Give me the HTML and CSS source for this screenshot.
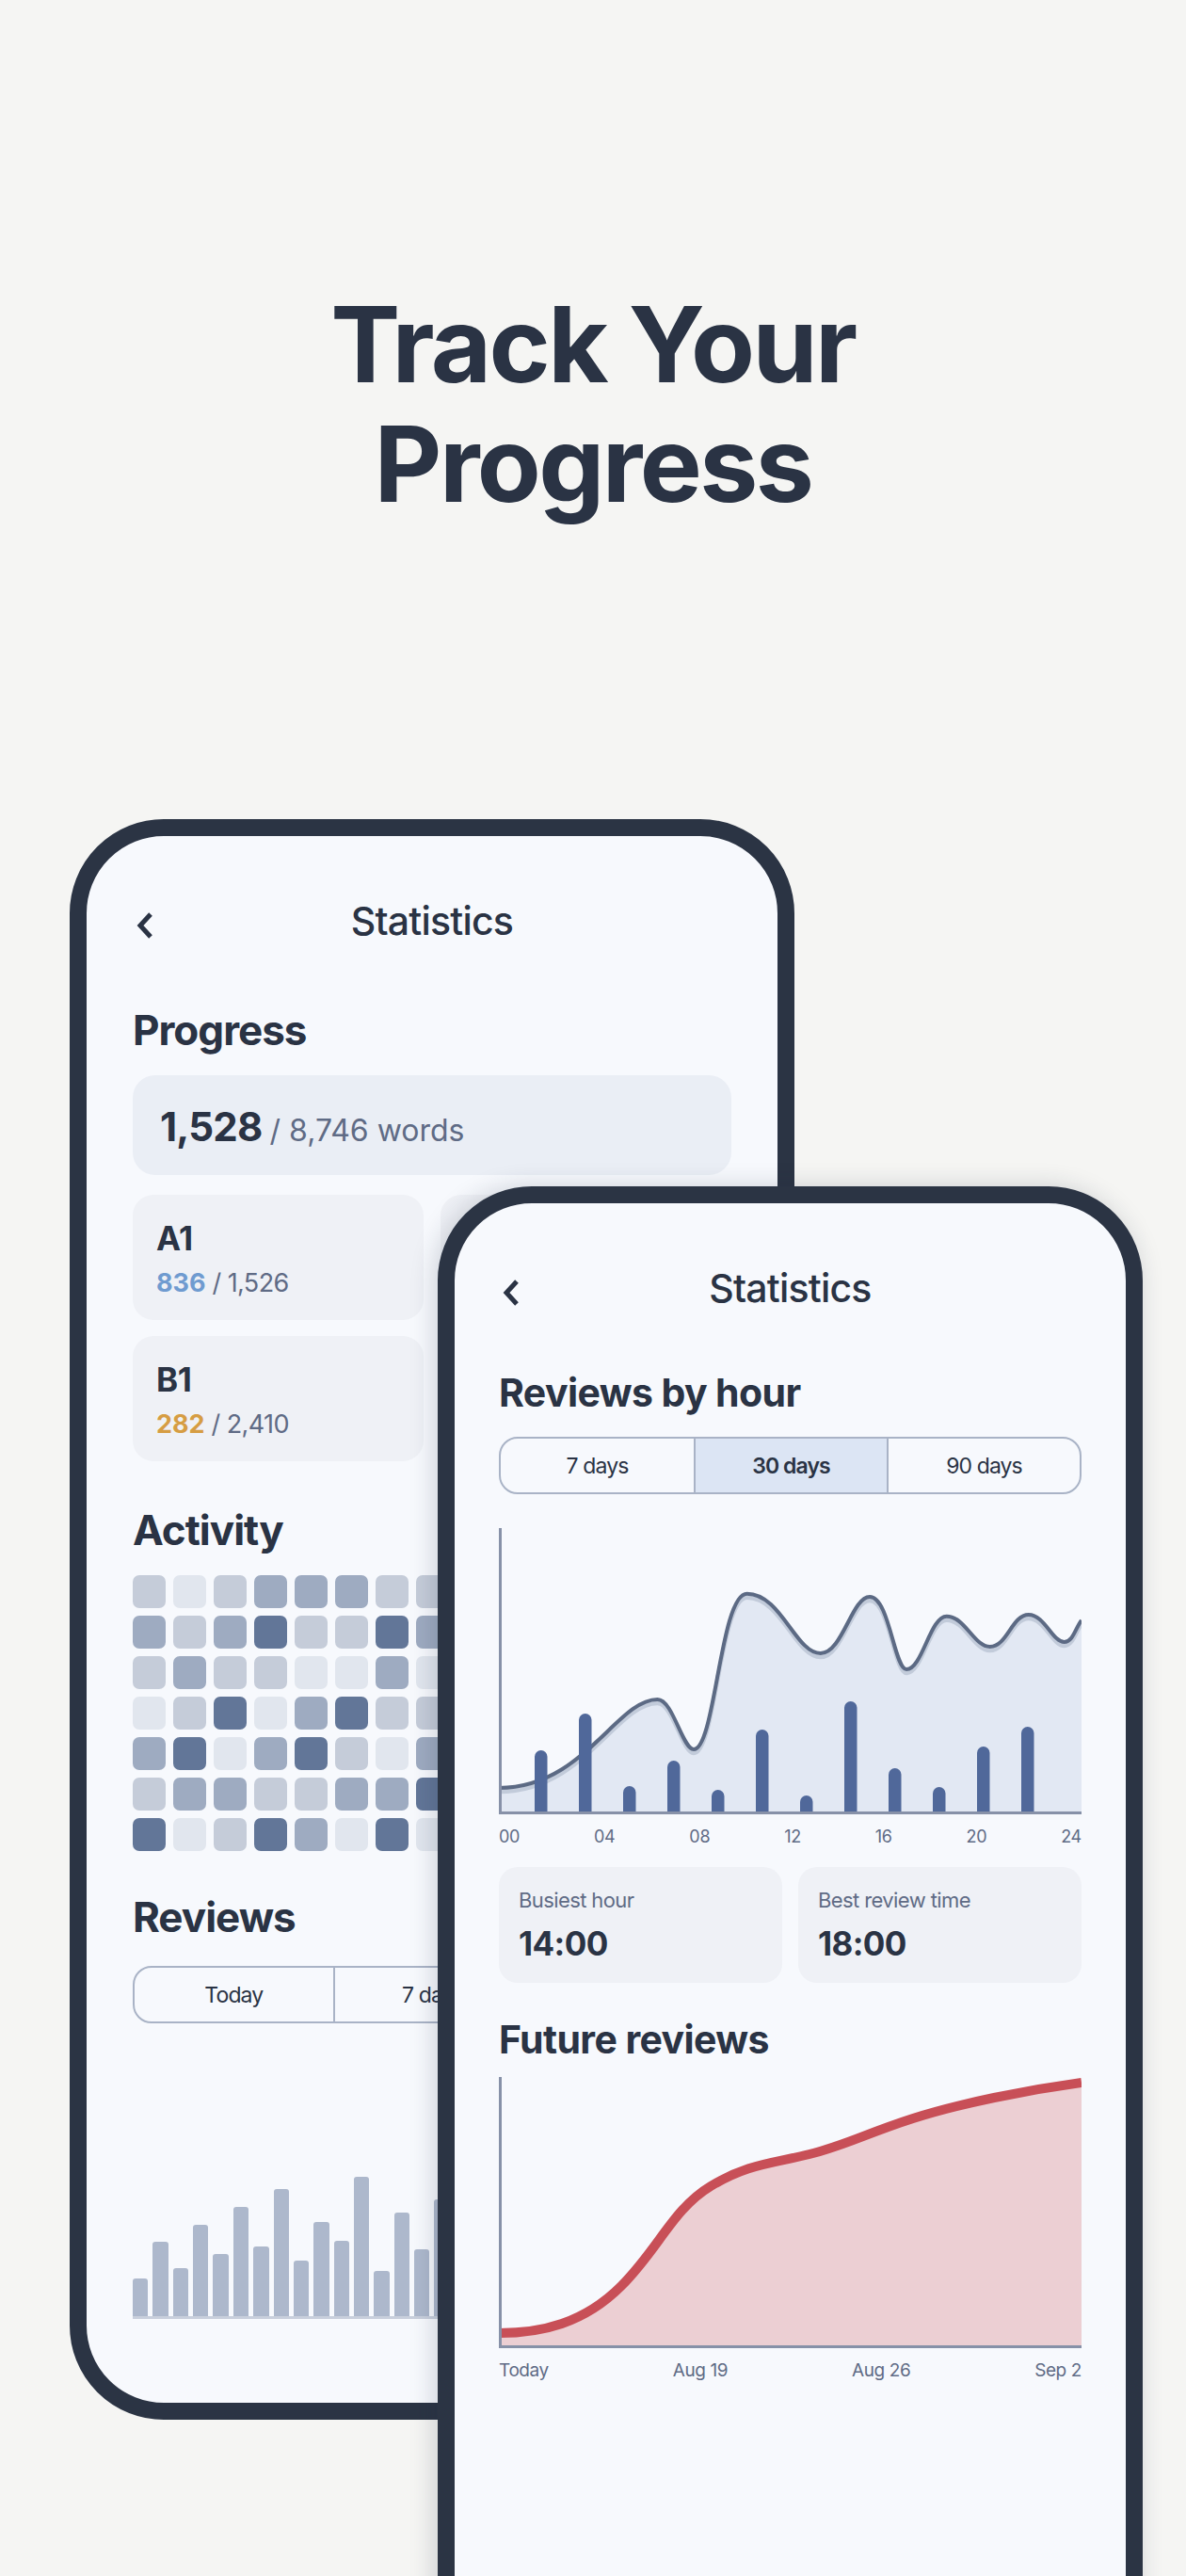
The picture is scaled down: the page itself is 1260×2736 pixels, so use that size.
FILE: index.html
```html
<!DOCTYPE html>
<html lang="en">
<head>
    <meta charset="UTF-8">
    <meta name="viewport" content="width=device-width, initial-scale=1.0">
    <title>Track Your Progress</title>
    <link rel="stylesheet" href="styles.css">
</head>
<body>
    <main class="page">
        <h1 class="hero">Track Your<br>Progress</h1>

        <div class="stage">
            <!-- back phone: overview -->
            <div class="phone phone-back">
                <div class="screen">
                    <header class="topbar">
                        <svg class="back" viewBox="0 0 22 30" width="22" height="30"><path d="M17 3 L6 15 L17 27" /></svg>
                        <span class="topbar-title">Statistics</span>
                    </header>

                    <h2 class="section-title st-progress">Progress</h2>
                    <div class="total-card">
                        <span class="total-num">1,528</span>
                        <span class="total-of">/ 8,746 words</span>
                    </div>

                    <div class="levels">
                        <div class="level-card">
                            <div class="level-name">A1</div>
                            <div class="level-count"><span class="learned blue">836</span> / 1,526</div>
                        </div>
                        <div class="level-card"></div>
                        <div class="level-card">
                            <div class="level-name">B1</div>
                            <div class="level-count"><span class="learned amber">282</span> / 2,410</div>
                        </div>
                        <div class="level-card"></div>
                    </div>

                    <h2 class="section-title st-activity">Activity</h2>
                    <div class="heatmap" id="heatmap"></div>

                    <h2 class="section-title st-reviews">Reviews</h2>
                    <div class="segmented seg-back">
                        <div class="seg">Today</div>
                        <div class="seg">7 days</div>
                        <div class="seg"></div>
                    </div>

                    <div class="bars" id="bars"></div>
                </div>
            </div>

            <!-- front phone: reviews by hour -->
            <div class="phone phone-front">
                <div class="screen screen-front">
                    <header class="topbar">
                        <svg class="back" viewBox="0 0 22 30" width="22" height="30"><path d="M17 3 L6 15 L17 27" /></svg>
                        <span class="topbar-title">Statistics</span>
                    </header>

                    <h2 class="section-title st-hour">Reviews by hour</h2>
                    <div class="segmented seg-front">
                        <div class="seg">7 days</div>
                        <div class="seg active">30 days</div>
                        <div class="seg">90 days</div>
                    </div>

                    <svg class="chart hour-chart" viewBox="0 0 619 304" width="619" height="304">
                        <path class="hour-area" d="M0,276 C90,276 125,182 168.5,182 C185,182 195,235 207,235 C230,235 235,69.7 263.6,69.7 C300,69.7 315,133 341.8,133 C365,133 375,73 394,73 C415,73 420,150 433,150 C450,150 458,93.7 475.7,93.7 C495,93.7 505,126 521.7,126 C540,126 545,92 562.75,92 C580,92 588,121 600.7,121 C610,121 613,105 619,98 L619,304 L0,304 Z" />
                        <path class="hour-glow" transform="translate(0 4)" d="M0,276 C90,276 125,182 168.5,182 C185,182 195,235 207,235 C230,235 235,69.7 263.6,69.7 C300,69.7 315,133 341.8,133 C365,133 375,73 394,73 C415,73 420,150 433,150 C450,150 458,93.7 475.7,93.7 C495,93.7 505,126 521.7,126 C540,126 545,92 562.75,92 C580,92 588,121 600.7,121 C610,121 613,105 619,98" />
                        <path class="hour-line" d="M0,276 C90,276 125,182 168.5,182 C185,182 195,235 207,235 C230,235 235,69.7 263.6,69.7 C300,69.7 315,133 341.8,133 C365,133 375,73 394,73 C415,73 420,150 433,150 C450,150 458,93.7 475.7,93.7 C495,93.7 505,126 521.7,126 C540,126 545,92 562.75,92 C580,92 588,121 600.7,121 C610,121 613,105 619,98" />
                        <g class="hour-bars" id="hour-bars"></g>
                        <line class="axis" x1="1.5" y1="0" x2="1.5" y2="304" />
                        <line class="axis" x1="0" y1="302.5" x2="619" y2="302.5" />
                    </svg>
                    <div class="axis-labels hour-labels">
                        <span>00</span><span>04</span><span>08</span><span>12</span><span>16</span><span>20</span><span>24</span>
                    </div>

                    <div class="info-row">
                        <div class="info-card">
                            <div class="info-label">Busiest hour</div>
                            <div class="info-value">14:00</div>
                        </div>
                        <div class="info-card">
                            <div class="info-label">Best review time</div>
                            <div class="info-value">18:00</div>
                        </div>
                    </div>

                    <h2 class="section-title st-future">Future reviews</h2>
                    <svg class="chart future-chart" viewBox="0 0 619 288" width="619" height="288">
                        <path class="future-area" d="M0,272 C45,272 90,262 130,222 S185,140 225,116 S290,92 330,82 S390,60 440,44 S560,14 619,6 L619,288 L0,288 Z" />
                        <path class="future-line" d="M0,272 C45,272 90,262 130,222 S185,140 225,116 S290,92 330,82 S390,60 440,44 S560,14 619,6" />
                        <line class="axis" x1="1.5" y1="0" x2="1.5" y2="288" />
                        <line class="axis" x1="0" y1="286.5" x2="619" y2="286.5" />
                    </svg>
                    <div class="axis-labels date-labels">
                        <span>Today</span><span>Aug 19</span><span>Aug 26</span><span>Sep 2</span>
                    </div>
                </div>
            </div>
        </div>
    </main>

    <script>
        // activity levels, 7 rows x 15 columns (0..3)
        const activity = [
            [1,0,1,2,2,2,1,1,0,2,1,3,1,0,2],
            [2,1,2,3,1,1,3,2,1,0,2,1,3,2,1],
            [1,2,1,1,0,0,2,0,2,1,1,3,0,1,2],
            [0,1,3,0,2,3,1,1,0,2,3,1,2,0,1],
            [2,3,0,2,3,1,0,2,1,1,0,2,1,3,0],
            [1,2,2,1,1,2,2,3,2,0,1,1,2,1,2],
            [3,0,1,3,2,0,3,0,1,2,2,0,3,1,1]
        ];
        const heatmap = document.getElementById('heatmap');
        activity.forEach(row => {
            row.forEach(level => {
                const cell = document.createElement('div');
                cell.className = 'cell l' + level;
                heatmap.appendChild(cell);
            });
        });

        // daily reviews on the back phone
        const dayCounts = [40, 79, 51, 97, 66, 116, 74, 135, 59, 100, 80, 148, 48, 110, 71, 124,
                           90, 60, 130, 75, 105, 55, 140, 85, 65, 118, 95, 70, 125, 80];
        const bars = document.getElementById('bars');
        dayCounts.forEach(h => {
            const bar = document.createElement('div');
            bar.className = 'bar';
            bar.style.height = h + 'px';
            bars.appendChild(bar);
        });

        // reviews by hour bars
        const hourCounts = [66, 105, 28, 55, 24, 88, 18, 118, 47, 27, 70, 91];
        const hourBars = document.getElementById('hour-bars');
        hourCounts.forEach((h, i) => {
            const x = 38 + i * 47;
            const top = 302 - h;
            const p = document.createElementNS('http://www.w3.org/2000/svg', 'path');
            p.setAttribute('d', `M${x},302 V${top + 6.75} a6.75,6.75 0 0 1 13.5,0 V302 Z`);
            hourBars.appendChild(p);
        });
    </script>
</body>
</html>
```

FILE: styles.css
```css
* {
    box-sizing: border-box;
}

html,
body {
    margin: 0;
    height: 2736px;
    overflow: hidden;
}

body {
    background: #f5f5f3;
    color: #2a3344;
    font-family: Inter, "Noto Sans", sans-serif;
}

.hero {
    margin: 302px 0 0;
    font-size: 111px;
    line-height: 127px;
    font-weight: 700;
    letter-spacing: -2.6px;
    text-align: center;
}

.stage {
    display: grid;
    margin-top: 314px;
}

.phone {
    grid-area: 1 / 1;
    border: 18px solid #2b3444;
    border-radius: 100px;
    background: #f7f9fd;
    overflow: hidden;
}

.phone-back {
    margin-left: 74px;
    width: 770px;
    height: 1700px;
}

.phone-front {
    margin-left: 465px;
    margin-top: 390px;
    width: 749px;
    height: 1600px;
    box-shadow: -4px 0 26px rgba(30, 40, 60, 0.18);
}

.screen {
    padding: 65px 49px 0;
}

.screen-front {
    padding: 65px 47px 0;
}

/* header */

.topbar {
    display: grid;
    grid-template-columns: 1fr auto 1fr;
    align-items: center;
    height: 50px;
}

.back {
    margin-top: 9px;
    margin-left: 2px;
}

.back path {
    fill: none;
    stroke: #2a3344;
    stroke-width: 5;
}

.topbar-title {
    font-size: 41px;
    line-height: 50px;
    font-weight: 500;
    letter-spacing: -0.8px;
}

.section-title {
    margin: 0;
    font-size: 44px;
    line-height: 52px;
    font-weight: 700;
    letter-spacing: -1px;
}

.screen-front .section-title {
    font-size: 41px;
    letter-spacing: -0.6px;
}

.st-progress { margin-top: 65px; }
.st-activity { margin-top: 47px; }
.st-reviews { margin-top: 44px; }
.st-hour { margin-top: 60px; }
.st-future { margin-top: 34px; }

/* progress */

.total-card {
    margin-top: 22px;
    height: 106px;
    padding: 34px 29px 0;
    background: #eaeef5;
    border-radius: 24px;
    display: flex;
    align-items: baseline;
    gap: 8px;
}

.total-num {
    font-size: 42px;
    line-height: 42px;
    font-weight: 700;
    letter-spacing: -0.8px;
}

.total-of {
    font-size: 32px;
    color: #5f6b85;
}

.levels {
    margin-top: 21px;
    display: grid;
    grid-template-columns: 1fr 1fr;
    gap: 17px 18px;
}

.level-card {
    height: 133px;
    padding: 25px 25px 0;
    background: #eff1f6;
    border-radius: 22px;
}

.level-name {
    font-size: 35px;
    line-height: 42px;
    font-weight: 700;
    letter-spacing: -0.5px;
}

.level-count {
    margin-top: 10px;
    font-size: 27px;
    line-height: 34px;
    letter-spacing: -0.6px;
    color: #5f6b85;
}

.learned {
    font-weight: 700;
    letter-spacing: 0;
}

.blue { color: #6f9bd0; }
.amber { color: #d69d43; }

/* activity */

.heatmap {
    margin-top: 22px;
    display: grid;
    grid-template-columns: repeat(15, 35px);
    grid-auto-rows: 35px;
    gap: 8px;
}

.cell {
    border-radius: 7px;
}

.l0 { background: #e1e6ee; }
.l1 { background: #c5ccd9; }
.l2 { background: #9eabc1; }
.l3 { background: #627698; }

/* segmented control */

.segmented {
    display: grid;
    grid-template-columns: repeat(3, 1fr);
    height: 61px;
    border: 2px solid #a9b3c6;
    border-radius: 20px;
    overflow: hidden;
}

.seg-back { margin-top: 26px; }
.seg-front { margin-top: 21px; }

.seg {
    display: flex;
    align-items: center;
    justify-content: center;
    font-size: 23px;
    letter-spacing: -0.9px;
}

.seg + .seg {
    border-left: 2px solid #a9b3c6;
}

.seg.active {
    background: #dce5f4;
    font-weight: 600;
}

/* daily bars */

.bars {
    margin-top: 111px;
    height: 203px;
    display: flex;
    align-items: flex-end;
    gap: 5px;
    border-bottom: 3px solid #c8cfdc;
}

.bar {
    flex: 1;
    background: #adb8cc;
    border-radius: 3px 3px 0 0;
}

/* charts */

.chart {
    display: block;
}

.hour-chart { margin-top: 36px; }
.future-chart { margin-top: 14px; }

.axis {
    stroke: #8791a8;
    stroke-width: 3;
}

.hour-area { fill: #e2e8f3; }

.hour-glow {
    fill: none;
    stroke: #c2cbda;
    stroke-width: 4.5;
}

.hour-line {
    fill: none;
    stroke: #5c6a84;
    stroke-width: 4;
}

.hour-bars path { fill: #50689a; }

.future-area { fill: #eccfd3; }

.future-line {
    fill: none;
    stroke: #c84f57;
    stroke-width: 10;
}

.axis-labels {
    display: flex;
    justify-content: space-between;
    margin-top: 12px;
    line-height: 23px;
    color: #5f6b85;
}

.hour-labels {
    font-size: 18px;
    letter-spacing: -0.3px;
}

.date-labels {
    font-size: 19px;
    letter-spacing: -0.4px;
}

/* info cards */

.info-row {
    margin-top: 21px;
    display: grid;
    grid-template-columns: 1fr 1fr;
    gap: 17px;
}

.info-card {
    height: 123px;
    padding: 22px 21px 0;
    background: #eff1f6;
    border-radius: 20px;
}

.info-label {
    font-size: 22px;
    line-height: 26px;
    letter-spacing: -0.6px;
    color: #5f6b85;
}

.info-value {
    margin-top: 12px;
    font-size: 35px;
    line-height: 42px;
    font-weight: 700;
    letter-spacing: -0.6px;
}
```
